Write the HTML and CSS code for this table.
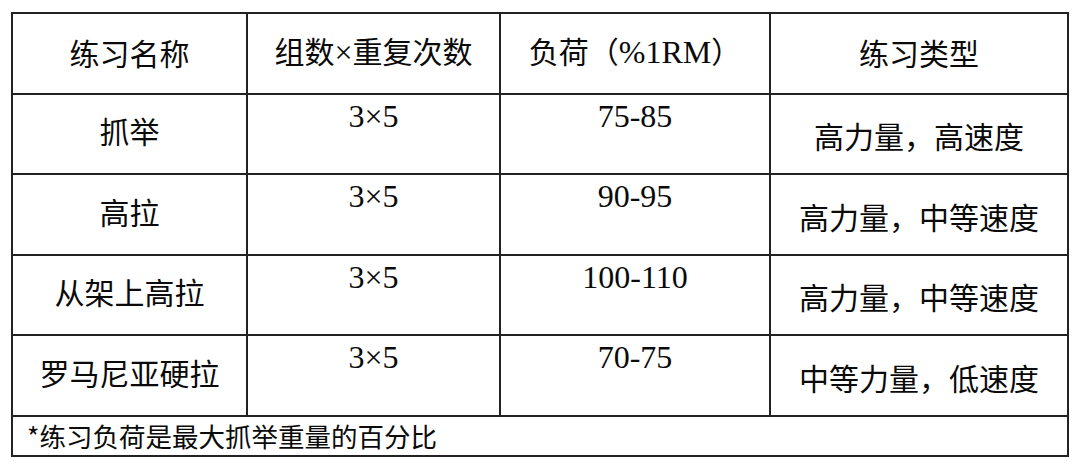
FILE: index.html
```html
<!DOCTYPE html>
<html lang="zh">
<head>
<meta charset="utf-8">
<link rel="stylesheet" href="styles.css">
</head>
<body>
<table class="grid">
  <colgroup>
    <col class="c1"><col class="c2"><col class="c3"><col class="c4">
  </colgroup>
  <thead>
    <tr class="head">
      <th>练习名称</th>
      <th>组数<span class="num">×</span>重复次数</th>
      <th>负荷（<span class="num">%1RM</span>）</th>
      <th>练习类型</th>
    </tr>
  </thead>
  <tbody>
    <tr class="row odd">
      <td class="name">抓举</td>
      <td class="num top">3×5</td>
      <td class="num top">75-85</td>
      <td class="type">高力量，高速度</td>
    </tr>
    <tr class="row">
      <td class="name">高拉</td>
      <td class="num top">3×5</td>
      <td class="num top">90-95</td>
      <td class="type">高力量，中等速度</td>
    </tr>
    <tr class="row odd">
      <td class="name">从架上高拉</td>
      <td class="num top">3×5</td>
      <td class="num top">100-110</td>
      <td class="type">高力量，中等速度</td>
    </tr>
    <tr class="row">
      <td class="name">罗马尼亚硬拉</td>
      <td class="num top">3×5</td>
      <td class="num top">70-75</td>
      <td class="type">中等力量，低速度</td>
    </tr>
    <tr class="foot">
      <td colspan="4">*练习负荷是最大抓举重量的百分比</td>
    </tr>
  </tbody>
</table>
</body>
</html>
```
FILE: styles.css
```css
html, body {
  margin: 0;
  padding: 0;
  background: #ffffff;
}
body {
  padding: 12px 0 0 11px;
  font-family: "Noto Sans CJK SC", "Noto Sans", sans-serif;
  color: #0a0a0a;
}
.grid {
  border-collapse: collapse;
  table-layout: fixed;
  width: 1058px;
}
.c1 { width: 235px; }
.c2 { width: 253px; }
.c3 { width: 270px; }
.c4 { width: 298px; }
.grid th,
.grid td {
  border: 2px solid #222222;
  padding: 0;
  text-align: center;
  font-weight: normal;
  font-size: 30px;
  line-height: 1.2;
  overflow: hidden;
  white-space: nowrap;
}
.head { height: 81px; }
.row { height: 81px; }
.row.odd { height: 80px; }
.foot { height: 40px; }
.head th {
  vertical-align: middle;
  padding-bottom: 3px;
}
.row td {
  vertical-align: middle;
}
.num {
  font-family: "Liberation Serif", "Noto Sans CJK SC", serif;
  font-size: 32px;
}
.grid td.top {
  vertical-align: top;
  padding-top: 2px;
  font-size: 32px;
}
.grid td.name {
  padding-bottom: 8px;
}
.grid td.type {
  padding-top: 2px;
}
.foot td {
  text-align: left;
  padding-left: 14px;
  font-size: 26.5px;
  vertical-align: middle;
}
```
